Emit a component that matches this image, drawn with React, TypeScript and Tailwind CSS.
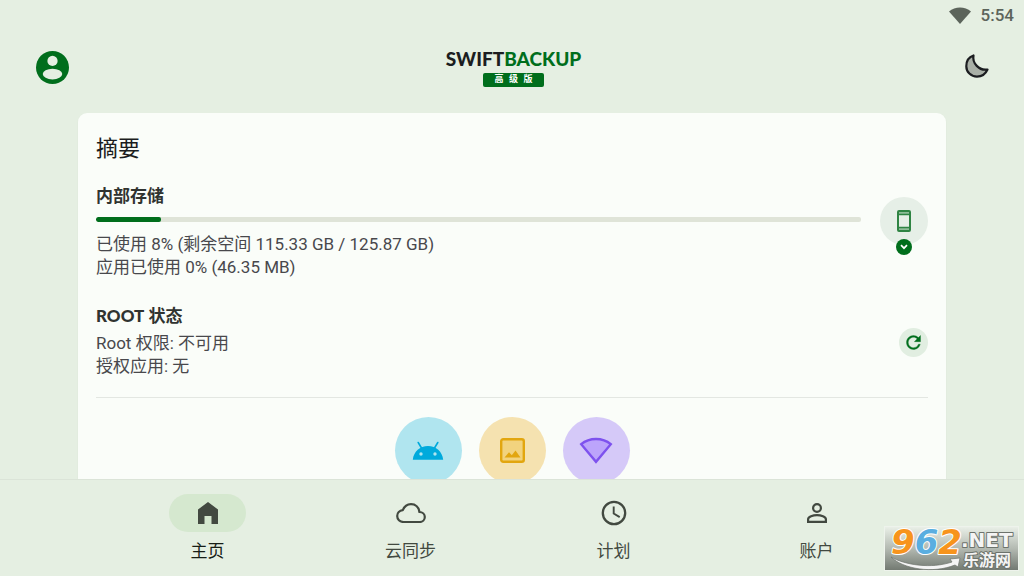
import type { ReactNode } from "react";

const storage = { label: "内部存储", filled: 8.5 };

function StatusBar() {
  return (
    <div className="flex h-[30px] shrink-0 items-center justify-end gap-[10px] pr-[10px] text-[#5c645b]">
      <svg viewBox="0 0 22 17" className="h-[17px] w-[22px]" aria-hidden="true">
        <path d="M0 4.5C6-.8 16-.8 22 4.5L11 17z" fill="currentColor" />
      </svg>
      <span className="text-[17px] leading-5 font-medium">5:54</span>
    </div>
  );
}

function Header() {
  return (
    <header className="grid h-[75px] shrink-0 grid-cols-[1fr_auto_1fr] items-center pr-[33px] pl-9">
      <button aria-label="账户" className="justify-self-start">
        <svg viewBox="2 2 20 20" className="size-[33px]" aria-hidden="true">
          <circle cx="12" cy="12" r="10" fill="#006e1c" />
          <circle cx="12" cy="8" r="3.1" fill="#e5efe2" />
          <ellipse cx="12" cy="16" rx="5.9" ry="3.2" fill="#e5efe2" />
        </svg>
      </button>
      <div className="flex flex-col items-center gap-1">
        <h1 className="font-[Lato,sans-serif] text-[19px] leading-5 font-black text-[#1b1d20]">
          SWIFT<span className="text-[#006e1c]">BACKUP</span>
        </h1>
        <span className="rounded-[2px] bg-[#006e1c] px-3 font-['Liberation_Mono','Noto_Sans_CJK_SC',monospace] text-[9px] leading-[14px] font-bold text-white">
          高 级 版
        </span>
      </div>
      <button aria-label="深色模式" className="justify-self-end px-[2px] pb-1">
        <svg viewBox="0 0 24 24" className="size-6" aria-hidden="true">
          <path
            d="M8.5 1.5C7 9 14 17 22.5 15.5C20.5 20 16.5 22.6 12 22.6C6 22.6 1.3 18 1.3 12.2C1.3 7 4 3 8.5 1.5z"
            fill="#a9b0a7"
            stroke="#1b1d20"
            strokeWidth="2.2"
            strokeLinejoin="round"
          />
        </svg>
      </button>
    </header>
  );
}

function StorageSection() {
  return (
    <section className="mt-[19px] flex gap-[19px]">
      <div className="min-w-0 flex-1">
        <h3 className="text-[17px] leading-6 font-bold text-[#303330]">{storage.label}</h3>
        <div
          role="progressbar"
          aria-label={storage.label}
          aria-valuenow={8}
          aria-valuemin={0}
          aria-valuemax={100}
          className="mt-[9px] mb-[11px] h-[5px] overflow-hidden rounded-[2px] bg-[#dfe4d8]"
        >
          <div className="h-full rounded-[2px] bg-[#006e1c]" style={{ width: `${storage.filled}%` }} />
        </div>
        <p>已使用 8% (剩余空间 115.33 GB / 125.87 GB)</p>
        <p>应用已使用 0% (46.35 MB)</p>
      </div>
      <button
        aria-label="选择存储"
        className="relative mt-[13px] flex size-12 items-center justify-center rounded-full bg-[#e6efe7]"
      >
        <svg viewBox="0 0 14 22" className="h-[22px] w-[14px]" fill="none" aria-hidden="true">
          <path d="M1 1h12v3.500H1zM1 17.500h12V21H1z" fill="#8fbd98" />
          <rect x="1" y="1" width="12" height="20" rx="1" stroke="#2f8443" strokeWidth="2" />
          <path d="M1 4.500h12M1 17.500h12" stroke="#2f8443" strokeWidth="1.4" />
        </svg>
        <span className="absolute top-[42px] left-4 flex size-4 items-center justify-center rounded-full bg-[#006e1c]">
          <svg viewBox="0 0 8 6" className="h-[6px] w-2" fill="none" aria-hidden="true">
            <path d="M1 1.2l3 3 3-3" stroke="#fff" strokeWidth="1.7" />
          </svg>
        </span>
      </button>
    </section>
  );
}

function RootSection() {
  return (
    <section className="mt-[25px] flex items-start justify-between border-b border-[#e3e7e2] pb-[19px]">
      <div>
        <h3 className="font-[Lato,'Noto_Sans_CJK_SC',sans-serif] text-[17px] leading-6 font-bold text-[#303330]">
          <span className="font-black">ROOT</span> 状态
        </h3>
        <p className="mt-1">Root 权限: 不可用</p>
        <p>授权应用: 无</p>
      </div>
      <button
        aria-label="刷新"
        className="mt-6 flex size-[29px] items-center justify-center rounded-full bg-[#e1eee1]"
      >
        <svg viewBox="0 0 24 24" className="size-[21px]" aria-hidden="true">
          <path
            fill="#006e1c"
            d="M17.65 6.35A7.958 7.958 0 0 0 12 4c-4.42 0-7.99 3.58-7.99 8s3.57 8 7.99 8c3.73 0 6.84-2.55 7.73-6h-2.08A5.99 5.99 0 0 1 12 18c-3.31 0-6-2.69-6-6s2.69-6 6-6c1.66 0 3.14.69 4.22 1.78L13 11h7V4l-2.35 2.35z"
            stroke="#006e1c"
            strokeWidth=".4"
          />
        </svg>
      </button>
    </section>
  );
}

function QuickActions() {
  return (
    <div className="mt-[19px] flex justify-center gap-[17px]">
      <button aria-label="应用" className="flex size-[67px] items-center justify-center rounded-full bg-[#b0e5ef]">
        <svg viewBox="0 0 32 20" className="h-5 w-8" aria-hidden="true">
          <path d="M6.2 1.5l3.6 6M25.8 1.5l-3.6 6" stroke="#00aadc" strokeWidth="1.6" strokeLinecap="round" />
          <path
            fill="#00aadc"
            fillRule="evenodd"
            d="M.8 18.8C1.6 10.5 8 5 16 5s14.4 5.500 15.200 13.800zM9 11.300a1.700 1.700 0 1 0 0 3.400 1.700 1.700 0 0 0 0-3.400zM23 11.300a1.700 1.700 0 1 0 0 3.400 1.700 1.700 0 0 0 0-3.400z"
          />
        </svg>
      </button>
      <button aria-label="壁纸" className="flex size-[67px] items-center justify-center rounded-full bg-[#f5e2b0]">
        <svg viewBox="0 0 25 25" className="size-[25px]" aria-hidden="true">
          <rect x="1.200" y="1.200" width="22.600" height="22.600" rx="2" fill="#f2d37e" stroke="#e2a60f" strokeWidth="2.400" />
          <path d="M4.500 19.500l4.500-5.300 2.800 3.100 3.700-4.900 5 7.100z" fill="#e2a60f" />
        </svg>
      </button>
      <button aria-label="WiFi" className="flex size-[67px] items-center justify-center rounded-full bg-[#d5c9f8]">
        <svg viewBox="0 0 34 27" className="h-[27px] w-[34px]" aria-hidden="true">
          <path d="M2.200 7.200C10.500.200 23.500.200 31.800 7.200L17 24.800z" fill="#bca4fb" stroke="#7e52ee" strokeWidth="2.400" />
        </svg>
      </button>
    </div>
  );
}

function NavItem({ label, active = false, children }: { label: string; active?: boolean; children: ReactNode }) {
  return (
    <a href="#" className="flex flex-col items-center" aria-current={active ? "page" : undefined}>
      <span
        className={`flex h-[38px] w-[77px] items-center justify-center rounded-full text-[#424940] ${active ? "bg-[#d5e8cf]" : ""}`}
      >
        {children}
      </span>
      <span className={`mt-[7px] text-[17px] leading-6 ${active ? "text-[#171d16]" : "text-[#424940]"}`}>{label}</span>
    </a>
  );
}

function BottomNav() {
  return (
    <nav className="h-[97px] shrink-0 border-t border-[#dbe4d8] bg-[#e5efe2] pt-[14px]">
      <div className="mx-auto grid max-w-[812px] grid-cols-4">
        <NavItem label="主页" active>
          <svg viewBox="0 0 20 22" className="h-[22px] w-5" aria-hidden="true">
            <path d="M0 22V7.500L10 0l10 7.500V22h-6.500v-8h-7v8z" fill="currentColor" />
          </svg>
        </NavItem>
        <NavItem label="云同步">
          <svg viewBox="0 0 30 20" className="h-5 w-[30px]" fill="none" aria-hidden="true">
            <path
              d="M7.500 19C3.700 19 1.200 16.200 1.200 13c0-3 2.300-5.500 5.600-5.800C8.300 3.500 11.200 1.200 15 1.200c4.500 0 7.800 3.100 8.400 7.800 3.200.100 5.400 2.300 5.400 5 0 2.800-2.200 5-5 5z"
              stroke="currentColor"
              strokeWidth="2.200"
              strokeLinejoin="round"
            />
          </svg>
        </NavItem>
        <NavItem label="计划">
          <svg viewBox="0 0 26 26" className="size-[26px]" fill="none" stroke="currentColor" aria-hidden="true">
            <circle cx="13" cy="13" r="11.200" strokeWidth="2.300" />
            <path d="M12.700 6.500v7l6 3.600" strokeWidth="1.900" />
          </svg>
        </NavItem>
        <NavItem label="账户">
          <svg viewBox="0 0 20 20" className="size-5" fill="none" stroke="currentColor" strokeWidth="2.200" aria-hidden="true">
            <circle cx="10" cy="5" r="3.900" />
            <path d="M1.100 18.800v-2.500c0-2.400 4.900-4.200 8.900-4.200s8.900 1.800 8.900 4.200v2.500z" />
          </svg>
        </NavItem>
      </div>
    </nav>
  );
}

function SiteBadge() {
  return (
    <div className="absolute right-[5px] bottom-[5px] h-[45px] w-[135px] border border-[#eef3ec] bg-linear-to-b from-[#e9efe7] via-[#b4bab2] to-[#737a72]">
      <svg viewBox="0 0 133 43" className="h-full w-full overflow-visible" aria-hidden="true">
        <path
          d="M6 30C20 38 46 42 67 35L65 32L75 31L73 40L70 38C48 47 18 42 6 30z"
          fill="#f4f4f4"
          stroke="#6d736c"
          strokeWidth=".7"
        />
        <g
          fontFamily="DejaVu Sans, sans-serif"
          fontWeight="700"
          stroke="#fff"
          strokeWidth="2"
          paintOrder="stroke"
          strokeLinejoin="round"
        >
          <text x="6" y="27" fontSize="34" fontStyle="italic" fill="#f7941d">
            9<tspan fill="#5aaee0">6</tspan>2
          </text>
          <text x="76" y="20" fontSize="20" fill="#f4f4f4" stroke="#6d736c">
            .NET
          </text>
          <text x="78" y="39" fontSize="16" fontFamily="Noto Sans CJK SC, sans-serif" fill="#f4f4f4" stroke="#6d736c">
            乐游网
          </text>
        </g>
      </svg>
    </div>
  );
}

export default function App() {
  return (
    <div className="relative flex h-screen flex-col bg-[#e5efe2] font-[Roboto,'Noto_Sans_CJK_SC',sans-serif]">
      <StatusBar />
      <Header />
      <main className="min-h-0 flex-1 overflow-hidden px-[78px] pt-2">
        <article className="rounded-[9px] bg-[#fafdf9] px-[18px] pt-5 pb-10 text-[17px] leading-[23px] text-[#48484c] shadow-xs">
          <h2 className="text-[22px] leading-8 text-[#1b1d20]">摘要</h2>
          <StorageSection />
          <RootSection />
          <QuickActions />
        </article>
      </main>
      <BottomNav />
      <SiteBadge />
    </div>
  );
}
